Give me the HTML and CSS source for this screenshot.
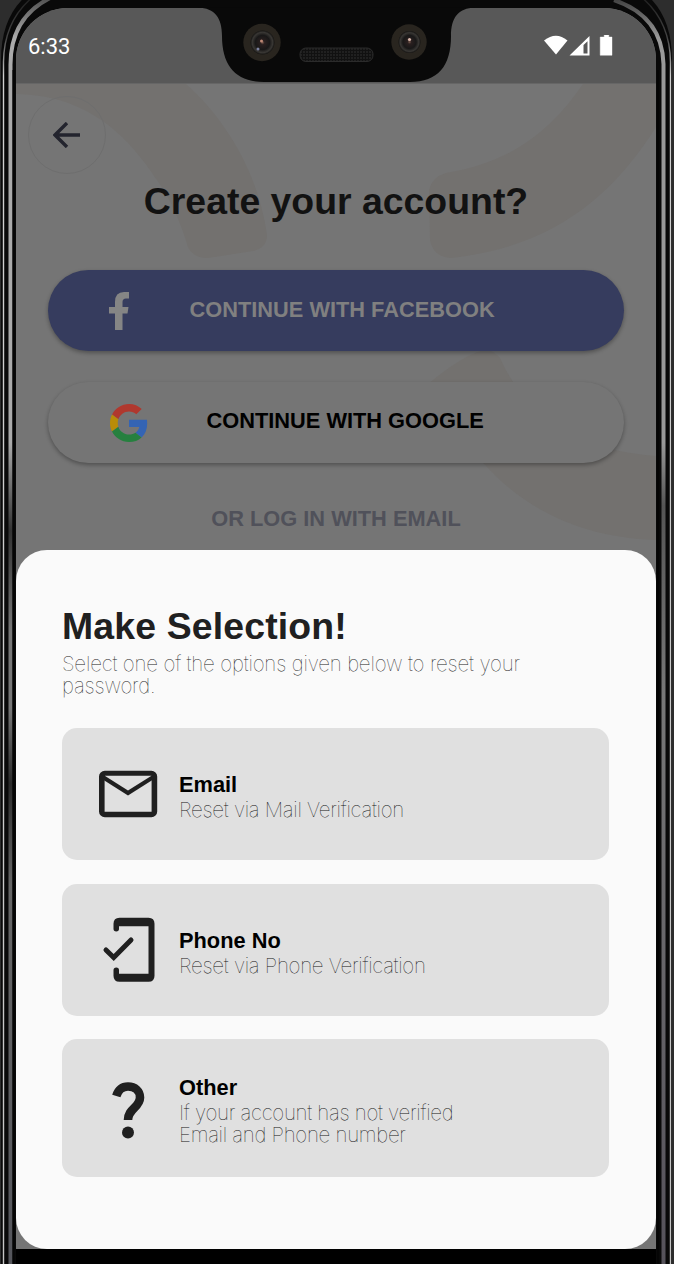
FILE: index.html
```html
<!DOCTYPE html>
<html lang="en">
<head>
<meta charset="utf-8">
<title>Create your account</title>
<link rel="stylesheet" href="styles.css">
</head>
<body>
<div class="device">
  <svg class="frame" viewBox="0 0 674 1264" aria-hidden="true">
    <defs>
      <linearGradient id="metal" x1="0" y1="0" x2="0" y2="1264" gradientUnits="userSpaceOnUse">
        <stop offset="0" stop-color="#555"/><stop offset=".03" stop-color="#aaa"/><stop offset=".35" stop-color="#aaa"/>
        <stop offset=".42" stop-color="#333"/><stop offset=".5" stop-color="#777"/>
        <stop offset=".56" stop-color="#777"/><stop offset=".62" stop-color="#2b2b2b"/>
        <stop offset=".7" stop-color="#666"/><stop offset="1" stop-color="#55565c"/>
      </linearGradient>
      <linearGradient id="metalR" x1="0" y1="0" x2="0" y2="1264" gradientUnits="userSpaceOnUse">
        <stop offset="0" stop-color="#444"/><stop offset=".03" stop-color="#999"/><stop offset=".35" stop-color="#999"/>
        <stop offset=".4" stop-color="#555"/><stop offset=".55" stop-color="#777"/><stop offset="1" stop-color="#55525a"/>
      </linearGradient>
      <linearGradient id="rim" x1="0" y1="0" x2="0" y2="1264" gradientUnits="userSpaceOnUse">
        <stop offset="0" stop-color="#222"/><stop offset=".03" stop-color="#444"/><stop offset=".06" stop-color="#d0d0d0"/><stop offset="1" stop-color="#c4c4c4"/>
      </linearGradient>
    </defs>
    <rect width="674" height="1264" fill="#2d2d2d"/>
    <path d="M1 1264V60Q1 18 26 -4H648Q672 18 672 60V1264Z" fill="#090909"/>
    <path d="M3.500 1264V62Q4 20 34 -4" fill="none" stroke="url(#rim)" stroke-width="1.400"/>
    <path d="M670.500 1264V62Q670 20 640 -4" fill="none" stroke="url(#rim)" stroke-width="1.400"/>
    <path d="M10.500 1264V66Q10 18 50 -2" fill="none" stroke="url(#metal)" stroke-width="4"/>
    <path d="M663.500 1264V64Q662 16 614 0" fill="none" stroke="url(#metalR)" stroke-width="4"/>
    <path d="M16 1264V62Q16 8 70 8H604Q656 8 656 62V1264Z" fill="#090909"/>
    <path d="M13.500 1264V70M658 1264V70" stroke="#050505" stroke-width="2"/>
  </svg>

  <div class="screen">
    <header class="status">
      <span class="clock">6:33</span>
      <svg class="status-icons" viewBox="0 0 70 21" aria-hidden="true">
        <path d="M0 5.500Q12-4 23.500 5.500L12 19.500Z" fill="#fff"/>
        <path d="M25.500 20.500L45.500 1V20.500ZM39.500 10V18.500H43.500V6.200Z" fill="#fff" fill-rule="evenodd"/>
        <path d="M60.200 0h4.600v2h3.200v18.300h-11.800V2h4z" fill="#fff" stroke="#fff" stroke-width=".4" stroke-linejoin="round"/>
      </svg>
    </header>

    <main class="page">
      <svg class="pattern" viewBox="16 84 640 480" aria-hidden="true">
        <g fill="#73716f">
          <path d="M16 84H186C222 116 258 169 267 235Q267 248 253 251L208 258Q193 258 188 247Q176 207 157 180C130 139 90 95 16 94Z"/>
          <path d="M583 84H656V127C610 200 550 247 451 258Q433 257 430 240L429 190Q432 177 446 173C510 163 551 131 583 84Z"/>
          <path d="M428 384Q463 355 484 350Q492 349 500 358Q540 448 656 456V540C570 537 515 501 478 457Q450 425 428 384Z"/>
        </g>
      </svg>
      <button class="back" aria-label="Back">
        <svg viewBox="0 0 28 26" aria-hidden="true"><path d="M27 13H2M14 1L2 13L14 25" fill="none" stroke="#23242e" stroke-width="3.400"/></svg>
      </button>
      <h1 class="title">Create your account?</h1>
      <button class="login facebook">
        <svg class="fb" viewBox="0 0 20 38" aria-hidden="true"><path d="M6 38V21.500H0V15H6V10Q6 0 15 0H20V6.500H17Q13.500 6.500 13.500 10V15H19.500L18.500 21.500H13.500V38Z" fill="#858585"/></svg>
        <span>CONTINUE WITH FACEBOOK</span>
      </button>
      <button class="login google">
        <svg class="gg" viewBox="0 0 48 48" aria-hidden="true">
          <path fill="#b0382e" d="M24 9.500c3.540 0 6.710 1.220 9.210 3.600l6.850-6.850C35.900 2.380 30.470 0 24 0 14.620 0 6.510 5.380 2.560 13.220l7.980 6.190C12.430 13.720 17.740 9.500 24 9.500z"/>
          <path fill="#3464b4" d="M46.980 24.550c0-1.570-.15-3.090-.38-4.550H24v9.020h12.940c-.58 2.960-2.260 5.480-4.780 7.180l7.730 6c4.510-4.180 7.090-10.360 7.090-17.650z"/>
          <path fill="#b98c08" d="M10.530 28.590c-.48-1.450-.76-2.990-.76-4.590s.27-3.140.76-4.590l-7.980-6.190C.92 16.460 0 20.120 0 24s.92 7.540 2.560 10.780z"/>
          <path fill="#26803f" d="M24 48c6.480 0 11.930-2.130 15.890-5.810l-7.730-6c-2.150 1.450-4.920 2.300-8.160 2.300-6.260 0-11.570-4.220-13.470-9.910l-7.980 6.190C6.510 42.620 14.620 48 24 48z"/>
        </svg>
        <span>CONTINUE WITH GOOGLE</span>
      </button>
      <p class="or">OR LOG IN WITH EMAIL</p>
    </main>

    <section class="sheet">
      <h2 class="sheet-title">Make Selection!</h2>
      <p class="light lead">Select one of the options given below to reset your<br>password.</p>
      <div class="options">
        <button class="option">
          <svg class="ico" viewBox="0 0 70 70" aria-hidden="true"><rect x="8.800" y="14.500" width="52.600" height="41" rx="3" fill="none" stroke="#202020" stroke-width="5.600"/><path d="M9 16H61V20L35 36.500L9 20Z" fill="#202020"/><path d="M11.700 16.700H58.500L35 31.500Z" fill="#e0e0e0"/></svg>
          <span class="copy"><b>Email</b><span class="light mail">Reset via Mail Verification</span></span>
        </button>
        <button class="option">
          <svg class="ico" viewBox="0 0 70 70" aria-hidden="true"><path transform="translate(0 -.7)" d="M20.500 14.500a2.700 2.700 0 0 0 5.500 0V12H55.500V59.500H26V56a2.700 2.700 0 0 0-5.500 0V61.500Q20.500 67.500 26.500 67.500H55.500Q61.500 67.500 61.500 61.500V9.500Q61.500 3.500 55.500 3.500H26.500Q20.500 3.500 20.500 9.500Z" fill="#202020"/><path d="M13 35L20.700 42.500L38 25" fill="none" stroke="#202020" stroke-width="5" stroke-linecap="round"/></svg>
          <span class="copy"><b>Phone No</b><span class="light phone">Reset via Phone Verification</span></span>
        </button>
        <button class="option tall">
          <svg class="ico" viewBox="0 0 70 70" aria-hidden="true"><path d="M23.300 23C25.500 16 30 13.500 35 13.500C42 13.500 47 18 47 24.500C47 34.500 35 35.500 35 47" fill="none" stroke="#202020" stroke-width="8.600"/><circle cx="35" cy="59.500" r="6" fill="#202020"/></svg>
          <span class="copy"><b>Other</b><span class="light other">If your account has not verified<br>Email and Phone number</span></span>
        </button>
      </div>
    </section>
  </div>
  <div class="nav"></div>

  <svg class="bezel" viewBox="0 0 674 100" aria-hidden="true">
    <defs>
      <radialGradient id="lens"><stop offset="0" stop-color="#77584c"/><stop offset=".18" stop-color="#2a2020"/><stop offset=".6" stop-color="#191818"/><stop offset=".85" stop-color="#393734"/><stop offset="1" stop-color="#151413"/></radialGradient>
      <pattern id="mesh" width="3" height="3" patternUnits="userSpaceOnUse"><rect width="3" height="3" fill="#111"/><circle cx="1" cy="1" r=".8" fill="#333"/></pattern>
    </defs>
    <path d="M198 7.500C215 8 222 18 222 36C222 66 236 82 264 82H410C438 82 451 66 451 36C451 18 458 8 475 7.500Z" fill="#090909"/>
    <circle cx="262" cy="42.500" r="18.700" fill="#29251f"/><circle cx="262.500" cy="42.500" r="12" fill="url(#lens)"/>
    <circle cx="261.500" cy="41" r="1.500" fill="#c08a76"/><circle cx="258" cy="49" r="1.500" fill="#7d82a0"/>
    <circle cx="409" cy="42" r="17.700" fill="#29251f"/><circle cx="409.500" cy="42" r="11" fill="url(#lens)"/><circle cx="409.500" cy="39.500" r="1.600" fill="#dbb9ad"/>
    <rect x="300" y="48" width="73" height="13.500" rx="6" fill="url(#mesh)" stroke="#2b2b2b"/>
  </svg>
</div>
</body>
</html>
```
FILE: styles.css
```css
* { box-sizing: border-box; }
body { margin: 0; background: #090909; font-family: "Liberation Sans", Arial, sans-serif; }
button { border: 0; padding: 0; font: inherit; color: inherit; text-align: left; }
h1, h2, p { margin: 0; }

.device { position: relative; width: 674px; height: 1264px; overflow: hidden; }
.frame { position: absolute; left: 0; top: 0; width: 674px; height: 1264px; }
.bezel { position: absolute; left: 0; top: 0; width: 674px; height: 100px; }

.screen {
  position: relative;
  width: 640px;
  height: 1241px;
  margin: 8px 0 0 16px;
  background: #757575;
  border-radius: 52px 52px 0 0;
  overflow: hidden;
  display: flex;
  flex-direction: column;
}
.status {
  flex: none;
  height: 76px;
  padding: 0 42px 0 12px;
  background: #585858;
  border-bottom: 1px solid #666;
  display: flex;
  align-items: center;
  justify-content: space-between;
  color: #fff;
}
.clock { font: 22px/24px Roboto, sans-serif; padding-top: 2px; }
.status-icons { width: 70px; height: 21px; }

.page {
  position: relative;
  flex: none;
  height: 466px;
  padding: 12px 32px 0;
  display: flex;
  flex-direction: column;
}
.pattern { position: absolute; left: 0; top: 0; width: 640px; height: 480px; }
.page > :not(.pattern) { position: relative; }
.back {
  width: 78px;
  height: 78px;
  flex: none;
  margin-left: -20px;
  border: 1.500px solid #6e6e6e;
  border-radius: 50%;
  background: none;
  display: flex;
  align-items: center;
  justify-content: center;
}
.back svg { width: 28px; height: 26px; }
.title { text-align: center; font-size: 37.400px; line-height: 44px; margin-top: 5px; color: #121212; white-space: nowrap; }
.login {
  flex: none;
  width: 576px;
  height: 81px;
  border-radius: 41px;
  display: grid;
  grid-template-columns: 40px auto;
  align-items: center;
  padding-left: 61px;
  font-size: 21.800px;
  font-weight: bold;
  white-space: nowrap;
  box-shadow: 0 2px 4px rgba(0, 0, 0, .32);
}
.login span { padding-bottom: 2px; }
.facebook { margin-top: 47px; background: #363c5e; color: #808080; column-gap: 40.500px; }
.google { margin-top: 31px; background: #757575; color: #000; column-gap: 57.500px; }
.google span { padding-bottom: 3px; }
.fb { width: 20px; height: 38px; }
.gg { width: 38px; height: 38px; margin-left: 1px; }
.or { margin-top: 43px; text-align: center; font-size: 21.800px; line-height: 26px; font-weight: bold; color: #50515a; }

.sheet {
  position: relative;
  flex: none;
  height: 699px;
  background: #fafafa;
  border-radius: 31px;
  padding: 54px 47px 0 46px;
}
.sheet-title { font-size: 37.400px; line-height: 44px; letter-spacing: .15px; color: #202020; }
.light { font-family: Inter, "Helvetica Neue", sans-serif; font-weight: 130; font-size: 20.500px; line-height: 22px; letter-spacing: -.18px; color: #222; white-space: nowrap; }
.lead { margin-top: 5px; }
.options { margin-top: 31px; display: flex; flex-direction: column; gap: 23.250px; }
.option {
  height: 132.250px;
  border-radius: 15px;
  background: #e0e0e0;
  display: flex;
  align-items: center;
  gap: 16px;
  padding-left: 31px;
}
.option.tall { height: 138px; }
.ico { width: 70px; height: 70px; }
.copy { display: flex; flex-direction: column; padding-top: 5px; }
.copy b { font-size: 21.800px; line-height: 25px; color: #000; }
.copy .light { line-height: 22px; padding-top: 2px; color: #111; letter-spacing: -.3px; }
.nav { position: relative; width: 640px; height: 15px; margin-left: 16px; background: #000; }
```
